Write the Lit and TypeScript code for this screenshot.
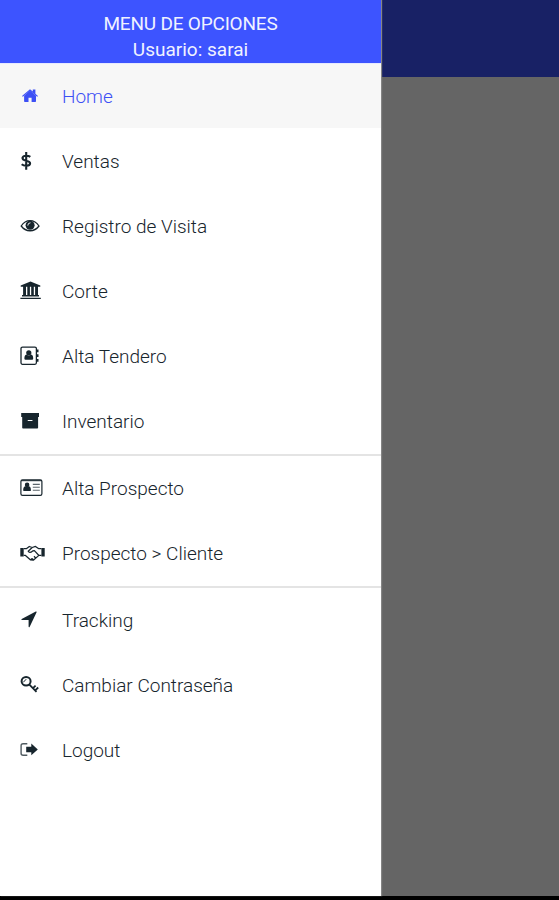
import { LitElement, html, css, svg } from "lit";
import { customElement, property } from "lit/decorators.js";
import { classMap } from "lit/directives/class-map.js";

// Each glyph is drawn in a 28x24 box.
const icons: Record<string, unknown> = {
  home: svg`<path d="M12 6.6 18 11.8V17.2a.7.7 0 0 1-.7.7H13.6V13.8H10.5V17.9H6.8a.7.7 0 0 1-.7-.7V11.8Z"/><path d="M4 12 12 5.2 14.8 7.6V5.4H17.4V9.8L20 12 19.2 12.8 12 6.7 4.8 12.8Z"/>`,
  dollar: svg`<path d="M12.3 7.9C10.8 6.6 5.2 5.7 4.5 8.8 4 12.6 12.3 10.7 12.1 14.4 11.8 17.7 5.8 17.2 3.7 15.3M8.2 3V20.8" fill="none" stroke="currentColor" stroke-width="2.1"/>`,
  eye: svg`<path d="M3.2 12C7.8 4.9 16.3 4.9 21 12 16.3 18.3 7.8 18.3 3.2 12Z" fill="none" stroke="currentColor" stroke-width="1.3"/><circle cx="12.1" cy="11.3" r="4.5"/><path d="M9.8 11.2a2.4 2.4 0 0 1 2.3-2.4" fill="none" stroke="#fff" stroke-width=".9" stroke-linecap="round"/>`,
  bank: svg`<path d="M12.5 2.5 22.3 6.4V7.7H2.7V6.4ZM5.1 7.7H8V16H9.3V7.7H11.9V16H13.2V7.7H15.8V16H17.1V7.7H20V16.1H21V17.4H4V16.1H5.1ZM2.4 18.7H22.8V20.1H2.4Z"/>`,
  contacts: svg`<rect x="3" y="3.1" width="15.4" height="17.2" rx="1.5" fill="none" stroke="currentColor" stroke-width="1.3"/><path d="M18.8 5.5H20.5V8.2H18.8ZM18.8 10.2H20.5V13H18.8ZM18.8 15H20.5V17.7H18.8Z"/><circle cx="10.8" cy="8.8" r="2.6"/><path d="M8.6 10.5C6.7 10.8 6.4 13 6.4 14.7Q6.5 15.8 7.5 15.8H14.1Q15.2 15.8 15.2 14.7C15.2 13 14.9 10.8 13 10.5Q10.8 12.3 8.6 10.5Z"/>`,
  archive: svg`<path d="M3.2 4H21V8.1H3.2ZM4.2 8H20.1V18.7a.8.8 0 0 1-.8.8H5a.8.8 0 0 1-.8-.8Z"/><path d="M10.2 11.5H14" stroke="#fff" stroke-width="1.2" stroke-linecap="round"/>`,
  card: svg`<rect x="2.9" y="3.8" width="21" height="15.6" rx="1.6" fill="none" stroke="currentColor" stroke-width="1.2"/><path d="M3 4.7H23.8" stroke="currentColor" stroke-width="1"/><circle cx="9.1" cy="8.9" r="2.3"/><path d="M7.3 10.3C5.5 10.5 5.2 12.7 5.2 14.2Q5.3 15.1 6.2 15.1H12Q12.9 15.1 12.9 14.2C12.9 12.7 12.7 10.5 10.9 10.3Q9.1 11.9 7.3 10.3Z"/><path d="M14.8 8.4H21.8M14.8 11.3H21.8M14.8 14.2H21.8" stroke="currentColor" stroke-width="1.1" opacity=".7"/>`,
  handshake: svg`<path d="M2.3 7H5.7V15.5H2.3ZM23.4 7H26.7V15.5H23.4Z"/><path d="M5.8 7.7H8.3L11.3 5.5 14.2 6.5 17.5 5.4 20.8 7.7H23.4M5.8 14.3H7.2L12.6 19 15.3 19.2 20.9 14.4H23.4M14.2 6.5 10.2 10.2Q11.4 12.6 14.7 9.9L16.4 9.6 20.7 14.2M12.7 18.8 14 17.5M15.4 18.8 14.2 17.5M17.6 17 16 15.3" fill="none" stroke="currentColor" stroke-width="1.25" stroke-linejoin="round"/>`,
  arrow: svg`<path d="M18.6 4.2 11.6 18.9a.55.55 0 0 1-1-.2V12.1H3.9a.55.55 0 0 1-.2-1L17.8 3.5a.6.6 0 0 1 .8.7Z"/>`,
  key: svg`<ellipse cx="8.1" cy="8.3" rx="4.5" ry="4.2" fill="none" stroke="currentColor" stroke-width="2"/><path d="M5.2 9.4 8.2 6.2" stroke="currentColor" stroke-width="1"/><path d="M10.9 11.2 18.5 18.9M15 15.2 17.6 12.7M17.2 17.3 20.2 14.5" fill="none" stroke="currentColor" stroke-width="1.8"/>`,
  logout: svg`<path d="M9.3 5.8H5.1Q3.1 5.8 3.1 7.8V15.2Q3.1 17.2 5.1 17.2H9.3" fill="none" stroke="currentColor" stroke-width="1.4" opacity=".75"/><path d="M13.3 5.5 19.8 11.4 13.3 17.3V14.2H8.2V8.7H13.3Z"/>`,
};

@customElement("menu-item")
class MenuItem extends LitElement {
  @property() icon = "";
  @property() label = "";
  @property({ type: Boolean }) active = false;

  static styles = css`
    :host { display: block; }
    .row {
      display: flex;
      align-items: center;
      height: 64px;
      margin-bottom: 1px;
      padding-left: 18px;
      box-sizing: border-box;
      color: #17252d;
    }
    .active { background: #f7f7f7; color: #3d50f5; }
    .icon { width: 28px; height: 24px; margin-right: 16px; fill: currentColor; flex: none; }
    .label { padding-top: 1px; font-size: 19px; line-height: 24px; white-space: nowrap; font-weight: 300; }
    .active .label { padding-top: 2px; }
  `;

  render() {
    return html`<div class=${classMap({ row: true, active: this.active })}>
      <svg class="icon" viewBox="0 0 28 24">${icons[this.icon]}</svg>
      <span class="label">${this.label}</span>
    </div>`;
  }
}

const groups = [
  [["home", "Home"], ["dollar", "Ventas"], ["eye", "Registro de Visita"], ["bank", "Corte"], ["contacts", "Alta Tendero"], ["archive", "Inventario"]],
  [["card", "Alta Prospecto"], ["handshake", "Prospecto > Cliente"]],
  [["arrow", "Tracking"], ["key", "Cambiar Contraseña"], ["logout", "Logout"]],
];

@customElement("app-root")
class AppRoot extends LitElement {
  static styles = css`
    :host {
      display: flex;
      flex-direction: column;
      height: 900px;
      overflow: hidden;
      background: #000;
      font-family: Roboto, sans-serif;
    }
    .screen { display: flex; height: 896px; }
    .drawer { width: 381px; background: #fff; box-shadow: 1px 0 1px #858585; z-index: 1; }
    .header {
      height: 64px;
      padding-top: 11px;
      box-sizing: border-box;
      background: #3d54ff;
      border-bottom: 1px solid #e6e9ff;
      color: #f0f2ff;
      text-align: center;
      font-size: 19px;
      line-height: 26px;
    }
    .title { letter-spacing: -0.2px; }
    .group + .group { border-top: 2px solid #e4e4e4; }
    .page { flex: 1; background: #656565; }
    .bar { height: 77px; background: #182165; }
  `;

  render() {
    return html`
      <div class="screen">
        <nav class="drawer">
          <div class="header"><div class="title">MENU DE OPCIONES</div><div class="user">Usuario: sarai</div></div>
          ${groups.map((g) => html`<div class="group">
            ${g.map(([icon, label]) => html`<menu-item .icon=${icon} .label=${label} .active=${icon === "home"}></menu-item>`)}
          </div>`)}
        </nav>
        <div class="page"><div class="bar"></div></div>
      </div>
    `;
  }
}
